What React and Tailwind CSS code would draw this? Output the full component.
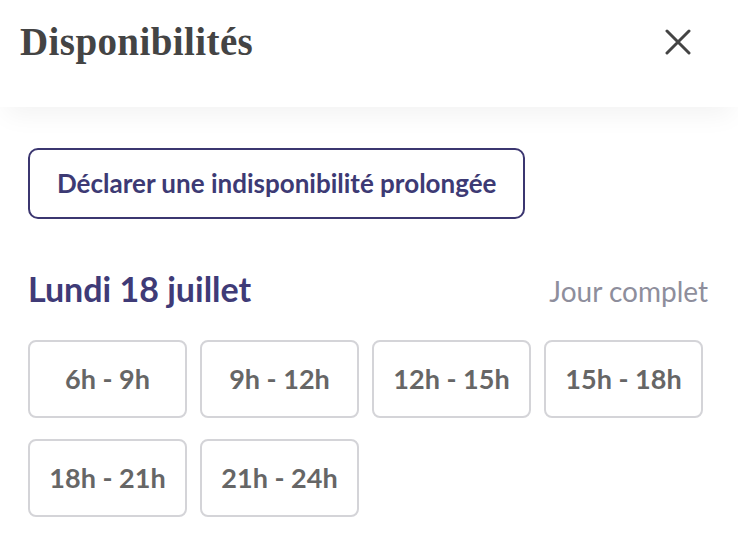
const slots = ["6h - 9h", "9h - 12h", "12h - 15h", "15h - 18h", "18h - 21h", "21h - 24h"];

const App = () => {
  return (
    <div className="min-h-[558px] w-[738px] bg-white font-['Lato',sans-serif]">
      {/* Header */}
      <header className="relative z-10 flex h-[107px] items-center justify-between bg-white pb-[23px] pl-[20px] pr-[47px] shadow-[0_14px_24px_-6px_rgba(0,0,0,0.05)]">
        <h1 className="font-['Liberation_Serif',serif] text-[39px] leading-[44px] font-bold tracking-[0.4px] text-[#444444]">
          Disponibilités
        </h1>
        <button className="flex h-[26px] w-[26px] items-center justify-center text-[#444444]">
          <svg width="26" height="26" viewBox="0 0 26 26" fill="none" stroke="currentColor" strokeWidth="3" strokeLinecap="round">
            <path d="M2 2 L24 24 M24 2 L2 24" />
          </svg>
        </button>
      </header>

      <main className="px-[28px] pt-[41px]">
        <button className="flex h-[71px] items-center rounded-[10px] border-2 border-[#3b3670] px-[27px] text-[26px] font-bold text-[#3d3a74]">
          Déclarer une indisponibilité prolongée
        </button>

        {/* Day header */}
        <div className="mt-[50px] flex h-[40px] items-baseline justify-between pr-[2px]">
          <h2 className="text-[34px] leading-[40px] font-bold text-[#3f3b77]">Lundi 18 juillet</h2>
          <span className="text-[28px] leading-[40px] text-[#8e8e9c]">Jour complet</span>
        </div>

        {/* Slots */}
        <ul className="mt-[31px] flex flex-wrap gap-x-[13px] gap-y-[21px]">
          {slots.map((slot, idx) => (
            <li key={idx}>
              <button className="flex h-[78px] w-[159px] items-center justify-center rounded-[8px] border-2 border-[#d4d4d8] text-[27px] font-bold text-[#666666]">
                {slot}
              </button>
            </li>
          ))}
        </ul>
      </main>
    </div>
  );
};

export default App;
